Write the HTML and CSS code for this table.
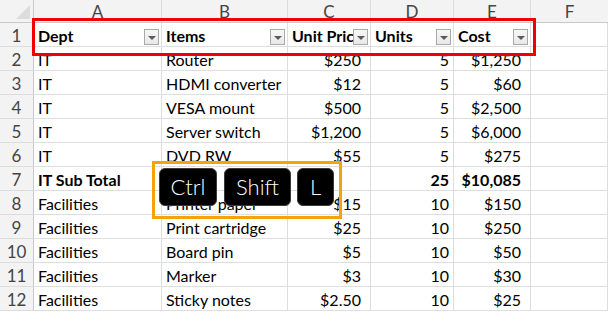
FILE: index.html
```html
<!DOCTYPE html>
<html>
<head>
<meta charset="utf-8">
<link rel="stylesheet" href="styles.css">
</head>
<body>
<div class="wrap">
  <div class="sheet">
    <div class="corner"></div>
    <div class="ch">A</div><div class="ch">B</div><div class="ch">C</div><div class="ch">D</div><div class="ch">E</div><div class="ch last">F</div>

    <div class="rh">1</div>
    <div class="c b">Dept<span class="fbtn"></span></div>
    <div class="c b">Items<span class="fbtn"></span></div>
    <div class="c b">Unit Price<span class="fbtn"></span></div>
    <div class="c b">Units<span class="fbtn"></span></div>
    <div class="c b">Cost<span class="fbtn"></span></div>
    <div class="c"></div>

    <div class="rh">2</div>
    <div class="c">IT</div><div class="c">Router</div><div class="c cur">$250</div><div class="c num">5</div><div class="c cur">$1,250</div><div class="c"></div>

    <div class="rh">3</div>
    <div class="c">IT</div><div class="c">HDMI converter</div><div class="c cur">$12</div><div class="c num">5</div><div class="c cur">$60</div><div class="c"></div>

    <div class="rh">4</div>
    <div class="c">IT</div><div class="c">VESA mount</div><div class="c cur">$500</div><div class="c num">5</div><div class="c cur">$2,500</div><div class="c"></div>

    <div class="rh">5</div>
    <div class="c">IT</div><div class="c">Server switch</div><div class="c cur">$1,200</div><div class="c num">5</div><div class="c cur">$6,000</div><div class="c"></div>

    <div class="rh">6</div>
    <div class="c">IT</div><div class="c">DVD RW</div><div class="c cur">$55</div><div class="c num">5</div><div class="c cur">$275</div><div class="c"></div>

    <div class="rh">7</div>
    <div class="c b">IT Sub Total</div><div class="c"></div><div class="c"></div><div class="c num b">25</div><div class="c cur b">$10,085</div><div class="c"></div>

    <div class="rh">8</div>
    <div class="c">Facilities</div><div class="c">Printer paper</div><div class="c cur">$15</div><div class="c num">10</div><div class="c cur">$150</div><div class="c"></div>

    <div class="rh">9</div>
    <div class="c">Facilities</div><div class="c">Print cartridge</div><div class="c cur">$25</div><div class="c num">10</div><div class="c cur">$250</div><div class="c"></div>

    <div class="rh">10</div>
    <div class="c">Facilities</div><div class="c">Board pin</div><div class="c cur">$5</div><div class="c num">10</div><div class="c cur">$50</div><div class="c"></div>

    <div class="rh">11</div>
    <div class="c">Facilities</div><div class="c">Marker</div><div class="c cur">$3</div><div class="c num">10</div><div class="c cur">$30</div><div class="c"></div>

    <div class="rh">12</div>
    <div class="c">Facilities</div><div class="c">Sticky notes</div><div class="c cur">$2.50</div><div class="c num">10</div><div class="c cur">$25</div><div class="c"></div>
  </div>

  <div class="hl-red"></div>
  <div class="hl-orange">
    <div class="key k-ctrl">Ctrl</div>
    <div class="key k-shift">Shift</div>
    <div class="key k-l">L</div>
  </div>
</div>
</body>
</html>
```
FILE: styles.css
```css
html, body {
  margin: 0;
  padding: 0;
  background: #fff;
  overflow: hidden;
}
.wrap {
  position: relative;
  width: 608px;
  height: 312px;
  overflow: hidden;
}
.sheet {
  display: grid;
  grid-template-columns: 34px 128px 126px 83px 83px 77px 77px;
  grid-template-rows: 23px repeat(12, 24px);
  font-family: Lato, "Liberation Sans", sans-serif;
  font-size: 16px;
  color: #000;
}
.corner {
  position: relative;
  background: #f3f3f3;
  border-right: 1px solid #c9c9c9;
  border-bottom: 1px solid #c9c9c9;
}
.corner::after {
  content: "";
  position: absolute;
  right: 3px;
  bottom: 3px;
  width: 14px;
  height: 14px;
  background: #dcdcdc;
  clip-path: polygon(100% 0, 100% 100%, 0 100%);
}
.ch {
  background: #f3f3f3;
  border-right: 1px solid #dcdcdc;
  border-bottom: 1px solid #c9c9c9;
  color: #454545;
  text-align: center;
  line-height: 23px;
  font-size: 17px;
}
.ch.last { border-right: none; }
.rh {
  background: #f3f3f3;
  border-right: 1px solid #c9c9c9;
  border-bottom: 1px solid #dcdcdc;
  color: #454545;
  text-align: center;
  padding-top: 1px;
  line-height: 23px;
  font-size: 17px;
}
.c {
  position: relative;
  border-right: 1px solid #dedede;
  border-bottom: 1px solid #dedede;
  line-height: 22px;
  padding: 2px 4px 0;
  white-space: nowrap;
  overflow: hidden;
}
.b { font-weight: bold; }
.num { text-align: right; padding-right: 4px; }
.cur { text-align: right; padding-right: 9px; }
.fbtn {
  position: absolute;
  right: 2px;
  top: 6px;
  width: 13px;
  height: 14px;
  border: 1px solid #a9a9a9;
  background: linear-gradient(#f7f7f7, #e8e8e8);
}
.fbtn::after {
  content: "";
  position: absolute;
  left: 3px;
  top: 6px;
  border-left: 4px solid transparent;
  border-right: 4px solid transparent;
  border-top: 4px solid #5a5a5a;
}
.hl-red {
  position: absolute;
  left: 32px;
  top: 18px;
  width: 498px;
  height: 32px;
  border: 3px solid #f00000;
}
.hl-orange {
  position: absolute;
  left: 152px;
  top: 161px;
  width: 180px;
  height: 45px;
  padding: 4px 0 3px 4px;
  border: 3px solid #f3a40c;
  display: flex;
  gap: 7px;
  box-sizing: content-box;
}
.key {
  height: 38px;
  background: #000;
  border: 1px solid #3a3a3a;
  box-sizing: border-box;
  border-radius: 6px;
  color: #fff;
  font-family: Lato, "DejaVu Sans", sans-serif;
  font-weight: 300;
  font-size: 22px;
  line-height: 36px;
  text-align: center;
}
.k-ctrl { width: 58px; }
.k-shift { width: 67px; }
.k-l { width: 37px; margin-left: -1px; }
```
